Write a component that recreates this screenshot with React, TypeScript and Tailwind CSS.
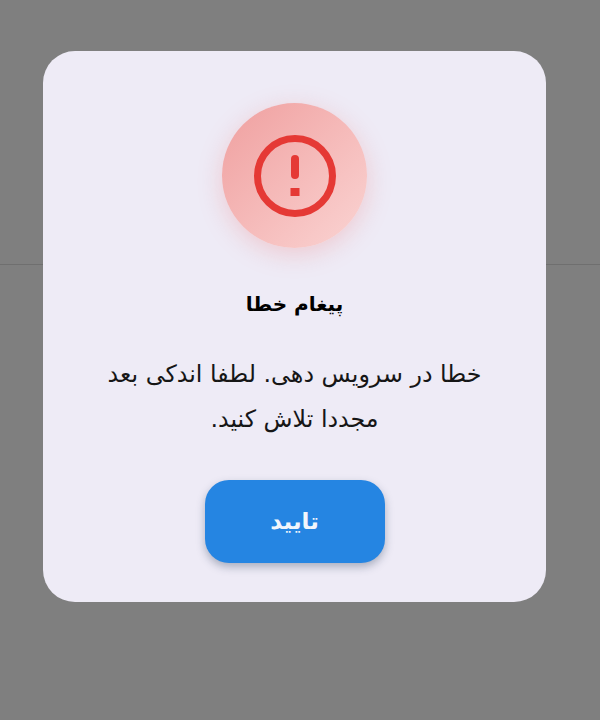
import React from "react";

export default function App() {
  return (
    <div className="relative h-[720px] w-[600px] overflow-hidden bg-[#7f7f7f]" style={{ fontFamily: '"DejaVu Sans", sans-serif' }}>
      {/* page behind the dialog */}
      <div className="h-[265px] border-b border-[#6f6f6f]" />

      <div dir="rtl" className="absolute left-[43px] top-[51px] flex h-[551px] w-[503px] flex-col items-center rounded-[32px] bg-[#eeebf6] pt-[52px]">
        <div className="flex h-[145px] w-[145px] items-center justify-center rounded-full bg-gradient-to-br from-[#ef9f9f] to-[#fad4d3] shadow-[0_6px_24px_rgba(239,130,130,0.32)]">
          <svg width="84" height="84" viewBox="0 0 84 84" fill="none">
            <circle cx="42" cy="42" r="37.5" stroke="#e53935" strokeWidth="7" />
            <rect x="38" y="21" width="8" height="24" rx="4" fill="#e53935" />
            <rect x="37.5" y="54" width="9" height="8" fill="#e53935" />
          </svg>
        </div>

        <h1 className="mt-[40px] text-[20px] font-bold leading-[32px] text-black">پیغام خطا</h1>

        <p className="mt-[32px] w-[400px] text-center text-[23.75px] leading-[45px] text-[#161616]">
          خطا در سرویس دهی. لطفا اندکی بعد مجددا تلاش کنید.
        </p>

        <button className="mt-[38px] h-[83px] w-[180px] rounded-[24px] bg-[#2585e2] text-[23px] font-bold text-[#f2f6fc] shadow-[0_4px_8px_rgba(40,60,90,0.35)]">
          تایید
        </button>
      </div>
    </div>
  );
}
